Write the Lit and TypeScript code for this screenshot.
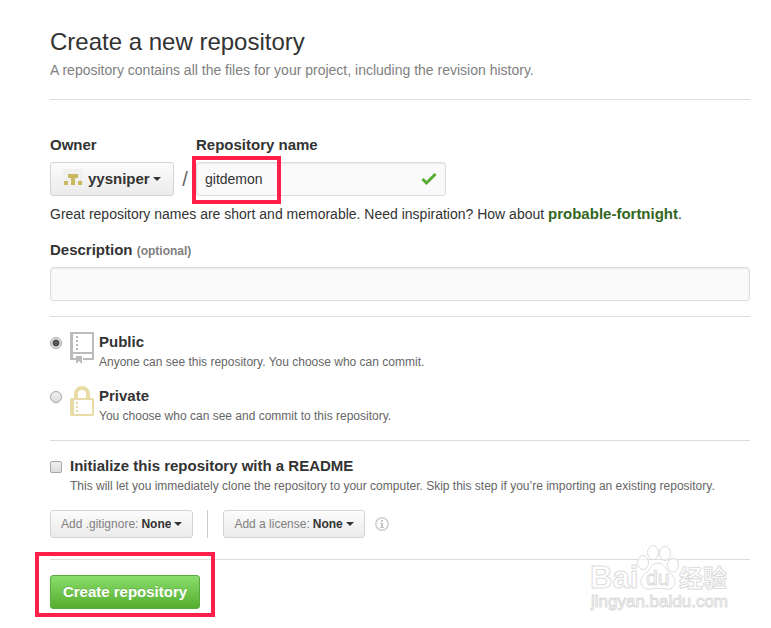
import { LitElement, html, css } from "lit";
import { customElement } from "lit/decorators.js";

@customElement("app-root")
export class AppRoot extends LitElement {
  static styles = css`
    :host {
      display: block;
      color: #333;
      background: #fff;
      font: 14px/20px "Liberation Sans", Arial, sans-serif;
    }
    * { box-sizing: border-box; }
    .page { padding: 26px 21px 10px 50px; }
    h1 { margin: 0; font-size: 24px; line-height: 32px; font-weight: 400; }
    .lead { margin: 2px 0 0; color: #808080; }
    hr { margin: 0; border: 0; border-top: 1px solid #ddd; }
    .lead + hr { margin-top: 19px; }
    .names { display: flex; align-items: flex-end; margin-top: 35px; }
    .field { display: flex; flex-direction: column; gap: 7px; position: relative; }
    .title { font-weight: 700; font-size: 15px; }
    .button {
      display: inline-flex;
      align-items: center;
      position: relative;
      border: 1px solid #d4d4d4;
      border-radius: 3px;
      background: linear-gradient(#fcfcfc, #ebebeb);
    }
    .owner { width: 124px; height: 34px; padding: 0 12px; }
    .owner svg { flex: none; }
    select {
      appearance: none;
      border: 0;
      padding: 0 11px 0 0;
      margin: 0;
      background: none;
      color: #333;
      font: inherit;
      font-weight: 700;
      outline: 0;
    }
    .owner select { font-size: 15px; margin-left: 5px; }
    .caret {
      position: absolute;
      right: 12px;
      top: 50%;
      margin-top: -2px;
      border: 4px solid transparent;
      border-top-color: #333;
      border-bottom: 0;
      pointer-events: none;
    }
    .slash { width: 22px; text-align: center; font-size: 20px; line-height: 34px; color: #666; }
    .text {
      width: 100%;
      height: 34px;
      padding: 0 8px;
      border: 1px solid #ddd;
      border-radius: 3px;
      background: #fafafa;
      box-shadow: inset 0 1px 2px rgba(0, 0, 0, 0.07);
      color: #333;
      font: inherit;
      outline: 0;
    }
    .repo { width: 250px; }
    .check { position: absolute; right: 9px; bottom: 10px; }
    .hint { margin: 8px 0 16px; }
    .hint a { color: #336621; font-weight: 700; font-size: 15px; text-decoration: none; }
    .small { font-size: 12px; color: #666; }
    .title .small { color: #808080; line-height: 16px; }
    .section { padding: 15px 0; }
    .option { display: grid; grid-template-columns: 20px 29px 1fr; align-items: start; height: 39px; }
    .option + .option { margin-top: 15px; }
    .option.init { grid-template-columns: 20px 1fr; }
    .copy { display: flex; flex-direction: column; }
    input[type="radio"], input[type="checkbox"] {
      appearance: none;
      width: 12px;
      height: 12px;
      margin: 5px 0 0;
      border: 1px solid #a6a6a6;
      background: linear-gradient(#f0f0f0, #dcdcdc);
    }
    input[type="radio"] { border-radius: 50%; }
    input[type="checkbox"] { border-radius: 2px; }
    input[type="radio"]:checked {
      background: radial-gradient(circle, #555 0 3px, #e6e6e6 4px);
    }
    .extras { display: flex; align-items: center; margin: 15px 0 21px; }
    .mini { height: 28px; padding: 0 10px; font-size: 12px; color: #808080; }
    .mini select { margin-left: 3px; }
    .mini .caret { right: 10px; }
    .rule { width: 1px; height: 28px; margin: 0 15px 0 14px; background: #ccc; }
    .info { margin-left: 10px; }
    .foot { position: relative; display: flex; margin-top: 15px; }
    .create {
      width: 150px;
      height: 34px;
      padding: 0;
      border: 1px solid #5ca941;
      border-radius: 3px;
      background: linear-gradient(#8add6d, #55ae2e);
      color: #fff;
      font: 700 15px/20px "Liberation Sans", Arial, sans-serif;
      text-shadow: 0 -1px 0 rgba(0, 0, 0, 0.15);
      white-space: nowrap;
    }
    .mark { position: absolute; border: 4px solid #ff1f4b; pointer-events: none; }
    .mark-name { left: -4px; bottom: -8px; width: 89px; height: 48px; }
    .mark-create { left: -15px; top: -23px; width: 180px; height: 65px; }
    .watermark {
      position: absolute;
      right: 20px;
      top: -31px;
      fill: #fff;
      fill-opacity: 0.6;
      stroke: #dcdcdc;
      stroke-width: 1px;
      pointer-events: none;
      font-family: "Liberation Sans", "Noto Sans CJK SC", sans-serif;
    }
    .brand { font-size: 31px; font-weight: 700; }
    .du { font-size: 21px; }
    .cjk { font-size: 24px; font-weight: 700; }
    .site { font-size: 17px; }
  `;

  private caret() {
    return html`<span class="caret"></span>`;
  }

  render() {
    return html`
      <main class="page">
        <h1>Create a new repository</h1>
        <p class="lead">A repository contains all the files for your project, including the revision history.</p>
        <hr />
        <form @submit=${(e: Event) => e.preventDefault()}>
          <div class="names">
            <div class="field">
              <label class="title" for="owner">Owner</label>
              <span class="button owner">
                <svg width="20" height="20" viewBox="0 0 20 20" aria-hidden="true">
                  <rect width="20" height="20" rx="2" fill="#f0f0f0" />
                  <path fill="#ccb85c" d="M5 5h10v4h-3v7H8V9H5zM1 12h4v4H1zM15 12h4v4h-4z" />
                </svg>
                <select id="owner"><option>yysniper</option></select>
                ${this.caret()}
              </span>
            </div>
            <span class="slash">/</span>
            <div class="field repo">
              <label class="title" for="name">Repository name</label>
              <input class="text" id="name" value="gitdemon" />
              <svg class="check" width="16" height="14" viewBox="0 0 16 14" aria-hidden="true">
                <path d="M1.500 7l4 4L14.500 2" fill="none" stroke="#55ac32" stroke-width="3" />
              </svg>
              <span class="mark mark-name"></span>
            </div>
          </div>
          <p class="hint">
            Great repository names are short and memorable. Need inspiration? How about
            <a href="#">probable-fortnight</a>.
          </p>
          <div class="field">
            <label class="title" for="description">Description <span class="small">(optional)</span></label>
            <input class="text" id="description" />
          </div>
          <div class="section">
            <hr />
          </div>
          <label class="option">
            <input type="radio" name="visibility" checked />
            <svg width="24" height="32" viewBox="0 0 24 32" aria-hidden="true">
              <path d="M13 27h10V1H1v26h5M1 21h22" fill="none" stroke="#bbb" stroke-width="2" stroke-linejoin="round" />
              <path d="M0 2h3v25H0zM6 4h2v2H6zM6 8h2v2H6zM6 12h2v2H6zM6 16h2v2H6zM6 24h6v8l-3-3-3 3z" fill="#bbb" />
            </svg>
            <span class="copy">
              <span class="title">Public</span>
              <span class="small">Anyone can see this repository. You choose who can commit.</span>
            </span>
          </label>
          <label class="option">
            <input type="radio" name="visibility" />
            <svg width="24" height="32" viewBox="0 0 24 32" aria-hidden="true">
              <path d="M6 13V8a6 6 0 0 1 12 0v5" fill="none" stroke="#e9dba5" stroke-width="4" />
              <rect x="1" y="13" width="22" height="16" rx="1" fill="none" stroke="#e9dba5" stroke-width="2" />
              <path d="M1 12h3v18H1zM6 16h2v2H6zM6 20h2v2H6zM6 24h2v2H6z" fill="#e9dba5" />
            </svg>
            <span class="copy">
              <span class="title">Private</span>
              <span class="small">You choose who can see and commit to this repository.</span>
            </span>
          </label>
          <div class="section">
            <hr />
          </div>
          <label class="option init">
            <input type="checkbox" />
            <span class="copy">
              <span class="title">Initialize this repository with a README</span>
              <span class="small">This will let you immediately clone the repository to your computer. Skip this step if you’re importing an existing repository.</span>
            </span>
          </label>
          <div class="extras">
            <label class="button mini">Add .gitignore:<select><option>None</option></select>${this.caret()}</label>
            <span class="rule"></span>
            <label class="button mini">Add a license:<select><option>None</option></select>${this.caret()}</label>
            <svg class="info" width="14" height="14" viewBox="0 0 14 14" aria-hidden="true">
              <circle cx="7" cy="7" r="6.200" fill="none" stroke="#ccc" stroke-width="1.500" />
              <path d="M6 3h2v2H6zM5 6h3v4h1v1H5v-1h1V7H5z" fill="#c4c4c4" />
            </svg>
          </div>
          <hr />
          <div class="foot">
            <button class="create" type="submit">Create repository</button>
            <span class="mark mark-create"></span>
            <svg class="watermark" width="140" height="72" viewBox="0 0 140 72">
              <text class="brand" x="0" y="44">Bai</text>
              <ellipse cx="53" cy="18.500" rx="5.500" ry="7" />
              <ellipse cx="63" cy="8.500" rx="5.500" ry="7" />
              <ellipse cx="75" cy="9.500" rx="5.500" ry="7" />
              <ellipse cx="83" cy="21" rx="5.500" ry="7" />
              <path d="M68 19c5 0 7 4 10 8 4 4 7 6 7 11s-4 8-9 7c-6-1-10-1-16 0-5 1-9-2-9-7s3-7 7-11c3-4 5-8 10-8z" />
              <text class="du" x="56" y="41">du</text>
              <text class="cjk" x="89" y="43">经验</text>
              <text class="site" x="1" y="63">jingyan.baidu.com</text>
            </svg>
          </div>
        </form>
      </main>
    `;
  }
}
